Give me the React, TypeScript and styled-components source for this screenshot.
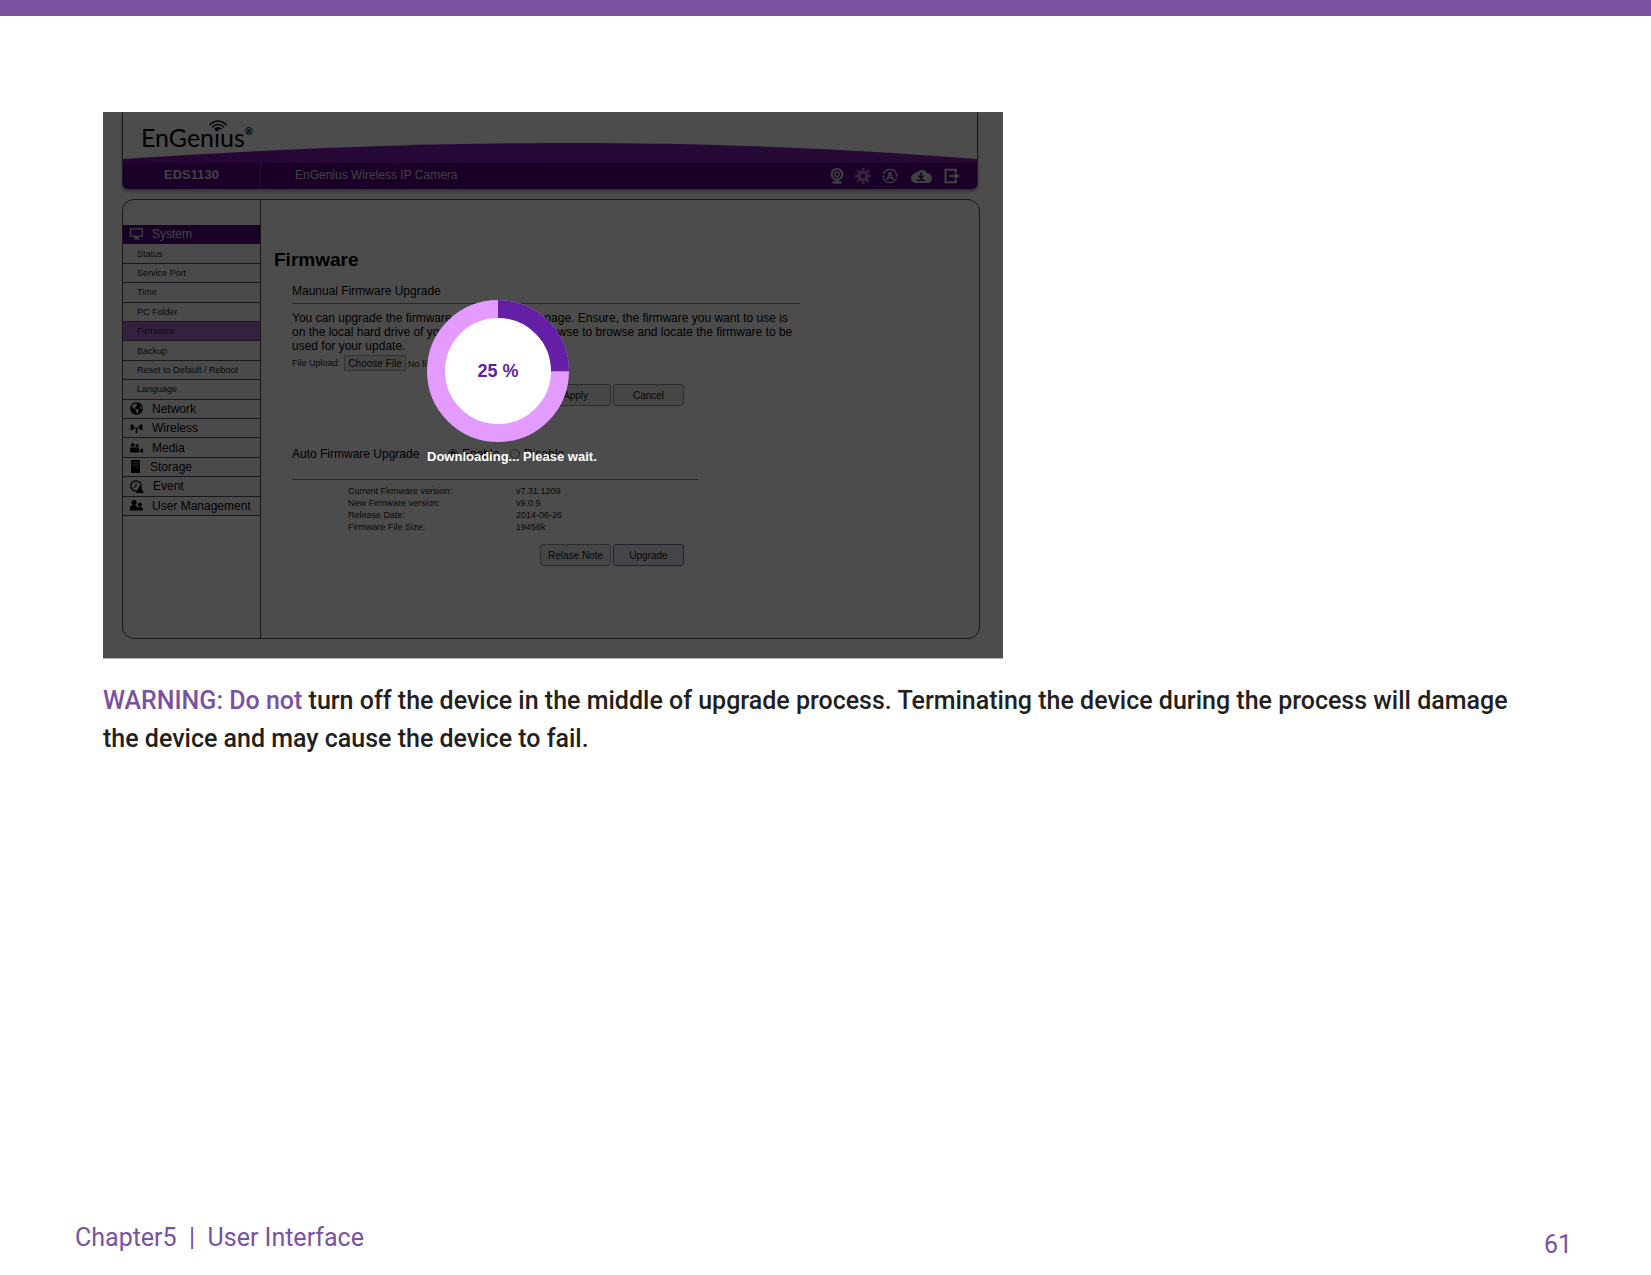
import React from "react";
import styled, { createGlobalStyle, css } from "styled-components";
import { FaGlobeAmericas } from "react-icons/fa";

const SANS = '"Liberation Sans", Arial, sans-serif';
const PRINT = 'Roboto, "Noto Sans", sans-serif';
const ACCENT = "#7a529f";
const LINE = "#505060";

const GlobalStyle = createGlobalStyle`
  * { box-sizing: border-box; }
  body { margin: 0; background: #fff; }
`;

const Page = styled.div`
  display: flex;
  flex-direction: column;
  min-height: 100vh;
  border-top: 16px solid ${ACCENT};
  font-family: ${PRINT};
`;

const Main = styled.main`
  padding: 96px 103px 0;
`;

const Screen = styled.section`
  position: relative;
  max-width: 900px;
  padding: 0 23px 19px 19px;
  background: #fff;
  border-bottom: 1px solid #b4b4b4;
  font-family: ${SANS};
  color: #000;
`;

const Header = styled.header`
  margin-right: 2px;
  border: solid ${LINE};
  border-width: 0 1px;
  border-radius: 0 0 5px 5px;
  box-shadow: 0 3px 4px -1px rgba(0, 0, 0, 0.4);
  overflow: hidden;
`;

const Brand = styled.div`
  position: relative;
  display: flex;
  height: 51px;
  padding: 9px 0 0 18px;
`;

const Swoosh = styled.svg`
  position: absolute;
  left: 0;
  bottom: 0;
  width: 100%;
  height: 20px;
`;

const LogoText = styled.span`
  position: relative;
  display: flex;
  align-items: flex-start;
  font: 400 25px/32px Lato, ${SANS};
  sup {
    font-size: 10px;
    font-weight: 700;
    line-height: 20px;
  }
`;

const Waves = styled.svg`
  position: absolute;
  left: 67px;
  top: -1px;
  width: 20px;
  height: 12px;
`;

const TitleBar = styled.div`
  display: flex;
  align-items: center;
  height: 26px;
  padding-right: 17px;
  background: #580080;
  color: #d8d8e0;
`;

const Model = styled.strong`
  flex: 0 0 138px;
  height: 26px;
  border-right: 1px solid #7b3f96;
  font-size: 13px;
  line-height: 24px;
  text-align: center;
`;

const Product = styled.span`
  flex: 1;
  height: 26px;
  padding-left: 34px;
  font-size: 12px;
  line-height: 24px;
`;

const Tools = styled.nav`
  display: flex;
  align-items: center;
  gap: 11px;
`;

const Tool = styled.a<{ $active?: boolean }>`
  display: flex;
  color: ${(p) => (p.$active ? "#b070d0" : "#d8d8e0")};
`;

const Panel = styled.div`
  display: grid;
  grid-template-columns: 138px 1fr;
  min-height: 440px;
  margin-top: 10px;
  border: 1px solid ${LINE};
  border-radius: 12px;
`;

const Sidebar = styled.nav`
  padding-top: 25px;
  border-right: 1px solid ${LINE};
`;

const Menu = styled.ul`
  display: grid;
  grid-template-rows: repeat(15, 1fr);
  height: 291px;
  margin: 0;
  padding: 0;
  list-style: none;
`;

const Item = styled.a<{ $kind: "group" | "sub"; $tone?: "open" | "current" }>`
  display: flex;
  align-items: center;
  height: 100%;
  border-bottom: 1px solid ${LINE};
  background: #f8f8fb;
  color: #000;
  text-decoration: none;
  white-space: nowrap;
  ${(p) =>
    p.$kind === "group"
      ? css`
          gap: 9px;
          padding-left: 7px;
          font-size: 12px;
        `
      : css`
          padding-left: 14px;
          color: #222;
          font-size: 9px;
        `}
  ${(p) =>
    p.$tone === "open" &&
    css`
      background: #580080;
      border-color: #580080;
      color: #e0e0e8;
    `}
  ${(p) =>
    p.$tone === "current" &&
    css`
      background: #b070d8;
    `}
`;

const Content = styled.div`
  padding: 48px 13px 0;
`;

const Title = styled.h1`
  margin: 0;
  font-size: 19px;
  line-height: 24px;
`;

const Block = styled.div`
  margin-left: 18px;
  max-width: 508px;
`;

const Subhead = styled.h2`
  margin: 0 0 7px;
  padding: 12px 0 4px;
  border-bottom: 1px solid #888;
  font-size: 12px;
  font-weight: 400;
  line-height: 15px;
`;

const Body = styled.p`
  margin: 0;
  font-size: 12px;
  line-height: 14px;
  white-space: nowrap;
`;

const Upload = styled.div`
  display: flex;
  align-items: center;
  gap: 4px;
  height: 20px;
  margin-bottom: 11px;
  color: #222;
  font-size: 9px;
`;

const FileInput = styled.input`
  color: #222;
  font: 9px ${SANS};
  &::file-selector-button {
    width: 62px;
    height: 16px;
    margin-right: 2px;
    padding: 0;
    border: 1px solid #aaa;
    background: #ececec;
    color: #111;
    font: 10px ${SANS};
  }
`;

const Actions = styled.div`
  display: flex;
  justify-content: flex-end;
  gap: 2px;
  width: 392px;
`;

const Button = styled.button<{ $focus?: boolean }>`
  width: 71px;
  height: 22px;
  padding: 0;
  border: 1px solid ${(p) => (p.$focus ? "#7070a0" : "#999")};
  border-radius: 3px;
  background: ${(p) => (p.$focus ? "#e8e8f6" : "#ececec")};
  color: #111;
  font: 10px ${SANS};
`;

const AutoRow = styled.fieldset`
  display: flex;
  align-items: center;
  width: 406px;
  min-width: 0;
  height: 48px;
  margin: 26px 0 5px;
  padding: 0 0 4px;
  border: 0;
  border-bottom: 1px solid #888;
  font-size: 12px;
`;

const AutoLabel = styled.span`
  width: 156px;
`;

const Choice = styled.label`
  display: flex;
  align-items: center;
  gap: 4px;
  width: 62px;
  input {
    width: 10px;
    height: 10px;
    margin: 0;
    accent-color: #444;
  }
`;

const Versions = styled.table`
  margin: 0 0 11px 56px;
  border-collapse: collapse;
  color: #222;
  font-size: 9px;
  line-height: 12px;
  th {
    width: 168px;
    padding: 0;
    font-weight: 400;
    text-align: left;
  }
  td {
    padding: 0;
  }
`;

const Overlay = styled.div`
  position: absolute;
  inset: 0;
  display: flex;
  flex-direction: column;
  align-items: flex-start;
  padding: 188px 0 0 324px;
  background: rgba(0, 0, 0, 0.7);
  color: #fff;
  font-size: 13px;
  font-weight: 700;
  line-height: 15px;
`;

const Donut = styled.div`
  display: grid;
  place-items: center;
  margin-bottom: 7px;
  > * {
    grid-area: 1 / 1;
  }
`;

const Percent = styled.span`
  color: #5f1fa0;
  font-size: 18px;
  line-height: 20px;
`;

const Warning = styled.p`
  margin: 23px 0 0;
  color: #231f20;
  font-size: 25px;
  font-weight: 500;
  line-height: 38px;
  strong {
    color: ${ACCENT};
    font-weight: 500;
  }
`;

const Footer = styled.footer`
  display: flex;
  justify-content: space-between;
  margin-top: auto;
  padding: 0 79px 15px 75px;
  color: ${ACCENT};
  font-size: 25px;
  font-weight: 400;
  line-height: 30px;
  white-space: pre;
`;

const Chapter = styled.span`
  padding-bottom: 7px;
`;

const PageNumber = styled.span`
  padding-top: 7px;
`;

const WebcamIcon = () => (
  <svg width="14" height="16" viewBox="0 0 14 16" fill="none" stroke="currentColor">
    <circle cx="7" cy="6.3" r="5.3" strokeWidth="2" />
    <circle cx="7" cy="6.3" r="2.2" strokeWidth="1.4" />
    <path d="M7 11.5v2M2.5 14.5h9" strokeWidth="2.4" />
  </svg>
);

const GearIcon = () => (
  <svg width="16" height="16" viewBox="0 0 16 16" fill="none" stroke="currentColor">
    <circle cx="8" cy="8" r="4" strokeWidth="3.6" />
    <path d="M8 0v3M8 13v3M0 8h3M13 8h3M2.300 2.300l2.200 2.200M11.500 11.500l2.200 2.200M2.300 13.700l2.200-2.200M11.500 4.500l2.200-2.200" strokeWidth="2.800" />
  </svg>
);

const AutoIcon = () => (
  <svg width="16" height="16" viewBox="0 0 16 16">
    <g fill="none" stroke="currentColor" strokeWidth="1.200">
      <path d="M1.400 6A7 7 0 0 1 14.600 6M14.600 10A7 7 0 0 1 1.400 10" />
    </g>
    <path d="M0 9.500L1.300 6.800 3 9.500zM13 6.500h3l-1.300 2.700z" fill="currentColor" />
    <text x="8" y="12" textAnchor="middle" fontSize="11" fontWeight="700" fontFamily="Liberation Sans, sans-serif" fill="currentColor">A</text>
  </svg>
);

const CloudIcon = () => (
  <svg width="24" height="15" viewBox="0 0 24 15">
    <path d="M6 14a5 5 0 0 1-.6-9.6A3.6 3.6 0 0 1 8.800 3 5.500 5.500 0 0 1 18.200 4.300 4.900 4.900 0 0 1 19 14z" fill="currentColor" />
    <path d="M12 3.500v5M9.500 6.500L12 9.300l2.500-2.800M8 11.300h8" fill="none" stroke="#3a1068" strokeWidth="1.600" />
  </svg>
);

const LogoutIcon = () => (
  <svg width="16" height="16" viewBox="0 0 16 16">
    <path d="M12 4.500V1.800H1.500v12.400H12v-2.700" fill="none" stroke="currentColor" strokeWidth="2" />
    <path d="M5.500 7h5V4.500L16 8l-5.500 3.500V9h-5z" fill="currentColor" />
  </svg>
);

const MonitorIcon = () => (
  <svg width="13" height="12" viewBox="0 0 13 12" fill="none" stroke="currentColor">
    <rect x=".6" y=".8" width="11.800" height="7.400" strokeWidth="1.200" />
    <path d="M4 8.200l2.500 2 2.500-2M3.800 10.900h5.400" strokeWidth="1.400" />
  </svg>
);

const WirelessIcon = () => (
  <svg width="13" height="10" viewBox="0 0 13 10" fill="none" stroke="currentColor">
    <path d="M1.800 1.500v5.500M11.200 1.500v5.500" strokeWidth="2.400" />
    <path d="M4 2.500v3.500M9 2.500v3.500" strokeWidth="1.200" />
    <path d="M6.500 4.500V10" strokeWidth="1.600" />
  </svg>
);

const MediaIcon = () => (
  <svg width="13" height="10" viewBox="0 0 13 10" fill="currentColor">
    <circle cx="2.800" cy="1.900" r="1.900" />
    <circle cx="7" cy="2.400" r="1.500" />
    <path d="M0 4.500h9.300v5H0zM10 7l3-2v5l-3-1.500z" />
  </svg>
);

const StorageIcon = () => (
  <svg width="11" height="13" viewBox="0 0 11 13">
    <path d="M1 0h9v13H1z" fill="currentColor" />
    <path d="M2 2.500h7M2 5h7" stroke="#aaa" strokeWidth=".8" />
    <circle cx="7.800" cy="8" r=".7" fill="#bbb" />
  </svg>
);

const EventIcon = () => (
  <svg width="14" height="13" viewBox="0 0 14 13">
    <circle cx="6" cy="6" r="5.200" fill="none" stroke="currentColor" strokeWidth="1.300" />
    <path d="M6 2.800V6.500L3.500 7.800" fill="none" stroke="currentColor" />
    <path d="M9.800 5.500l4.200 7.500H5.800z" fill="currentColor" />
  </svg>
);

const UsersIcon = () => (
  <svg width="13" height="11" viewBox="0 0 13 11" fill="currentColor">
    <circle cx="4" cy="2.600" r="2.500" />
    <path d="M0 10.500V7.500Q0 5 4 5t3 5.500zM7 10.500Q6.500 7 9.800 6.500 13 7 13 10.500z" />
    <circle cx="9.800" cy="4.600" r="2" />
  </svg>
);

const subItems = ["Status", "Service Port", "Time", "PC Folder", "Firmware", "Backup", "Reset to Default / Reboot", "Language"];

const groups = [
  { label: "Network", icon: <FaGlobeAmericas size={13} /> },
  { label: "Wireless", icon: <WirelessIcon /> },
  { label: "Media", icon: <MediaIcon /> },
  { label: "Storage", icon: <StorageIcon /> },
  { label: "Event", icon: <EventIcon /> },
  { label: "User Management", icon: <UsersIcon /> },
];

const versions = [
  ["Current Firmware version:", "v7.31.1209"],
  ["New Firmware version:", "v9.0.9"],
  ["Release Date:", "2014-06-26"],
  ["Firmware File Size:", "19456k"],
];

function ProgressDonut({ value }: { value: number }) {
  const radius = 62;
  const length = 2 * Math.PI * radius;
  return (
    <Donut role="progressbar" aria-valuenow={value}>
      <svg width="142" height="142" viewBox="0 0 142 142">
        <circle cx="71" cy="71" r="60" fill="#fff" />
        <circle cx="71" cy="71" r={radius} fill="none" stroke="#e49bff" strokeWidth="18" />
        <circle
          cx="71"
          cy="71"
          r={radius}
          fill="none"
          stroke="#641fa6"
          strokeWidth="18"
          strokeDasharray={`${(length * value) / 100} ${length}`}
          transform="rotate(-90 71 71)"
        />
      </svg>
      <Percent>{value} %</Percent>
    </Donut>
  );
}

export default function App() {
  return (
    <Page>
      <GlobalStyle />
      <Main>
        <Screen>
          <Header>
            <Brand>
              <Swoosh viewBox="0 0 856 20" preserveAspectRatio="none">
                <defs>
                  <linearGradient id="sweep">
                    <stop offset="0" stopColor="#7a12a8" />
                    <stop offset=".4" stopColor="#8420c0" />
                    <stop offset="1" stopColor="#8420b0" />
                  </linearGradient>
                </defs>
                <path d="M0 16Q220 1 430 0T856 16V20H0z" fill="url(#sweep)" />
              </Swoosh>
              <LogoText>
                EnGenius<sup>®</sup>
                <Waves viewBox="0 0 20 12" fill="none" stroke="#000" strokeWidth="1.200">
                  <path d="M1.500 5Q10-3 18.500 5M4 7.300Q10 1.500 16 7.300M6.500 9.500Q10 6 13.500 9.500" />
                </Waves>
              </LogoText>
            </Brand>
            <TitleBar>
              <Model>EDS1130</Model>
              <Product>EnGenius Wireless IP Camera</Product>
              <Tools>
                <Tool href="#live" aria-label="Live view"><WebcamIcon /></Tool>
                <Tool href="#settings" aria-label="Settings" $active><GearIcon /></Tool>
                <Tool href="#auto" aria-label="Auto"><AutoIcon /></Tool>
                <Tool href="#download" aria-label="Download"><CloudIcon /></Tool>
                <Tool href="#logout" aria-label="Log out"><LogoutIcon /></Tool>
              </Tools>
            </TitleBar>
          </Header>
          <Panel>
            <Sidebar>
              <Menu>
                <li>
                  <Item href="#system" $kind="group" $tone="open"><MonitorIcon />System</Item>
                </li>
                {subItems.map((label) => (
                  <li key={label}>
                    <Item href="#sub" $kind="sub" $tone={label === "Firmware" ? "current" : undefined}>{label}</Item>
                  </li>
                ))}
                {groups.map((g) => (
                  <li key={g.label}>
                    <Item href="#group" $kind="group">{g.icon}{g.label}</Item>
                  </li>
                ))}
              </Menu>
            </Sidebar>
            <Content>
              <Title>Firmware</Title>
              <Block>
                <Subhead>Maunual Firmware Upgrade</Subhead>
                <Body>
                  You can upgrade the firmware from here in this page. Ensure, the firmware you want to use is
                  <br />
                  on the local hard drive of your computer. Click Browse to browse and locate the firmware to be
                  <br />
                  used for your update.
                </Body>
                <Upload>
                  <label htmlFor="firmware-file">File Upload:</label>
                  <FileInput id="firmware-file" type="file" />
                </Upload>
                <Actions>
                  <Button type="button">Apply</Button>
                  <Button type="button">Cancel</Button>
                </Actions>
                <AutoRow>
                  <AutoLabel>Auto Firmware Upgrade</AutoLabel>
                  <Choice><input type="radio" name="auto" defaultChecked />Enable</Choice>
                  <Choice><input type="radio" name="auto" />Disable</Choice>
                </AutoRow>
                <Versions>
                  <tbody>
                    {versions.map(([name, value]) => (
                      <tr key={name}>
                        <th scope="row">{name}</th>
                        <td>{value}</td>
                      </tr>
                    ))}
                  </tbody>
                </Versions>
                <Actions>
                  <Button type="button">Relase Note</Button>
                  <Button type="button" $focus>Upgrade</Button>
                </Actions>
              </Block>
            </Content>
          </Panel>
          <Overlay>
            <ProgressDonut value={25} />
            Downloading... Please wait.
          </Overlay>
        </Screen>
        <Warning>
          <strong>WARNING: Do not</strong> turn off the device in the middle of upgrade process. Terminating the device
          during the process will damage the device and may cause the device to fail.
        </Warning>
      </Main>
      <Footer>
        <Chapter>Chapter5  |  User Interface</Chapter>
        <PageNumber>61</PageNumber>
      </Footer>
    </Page>
  );
}
